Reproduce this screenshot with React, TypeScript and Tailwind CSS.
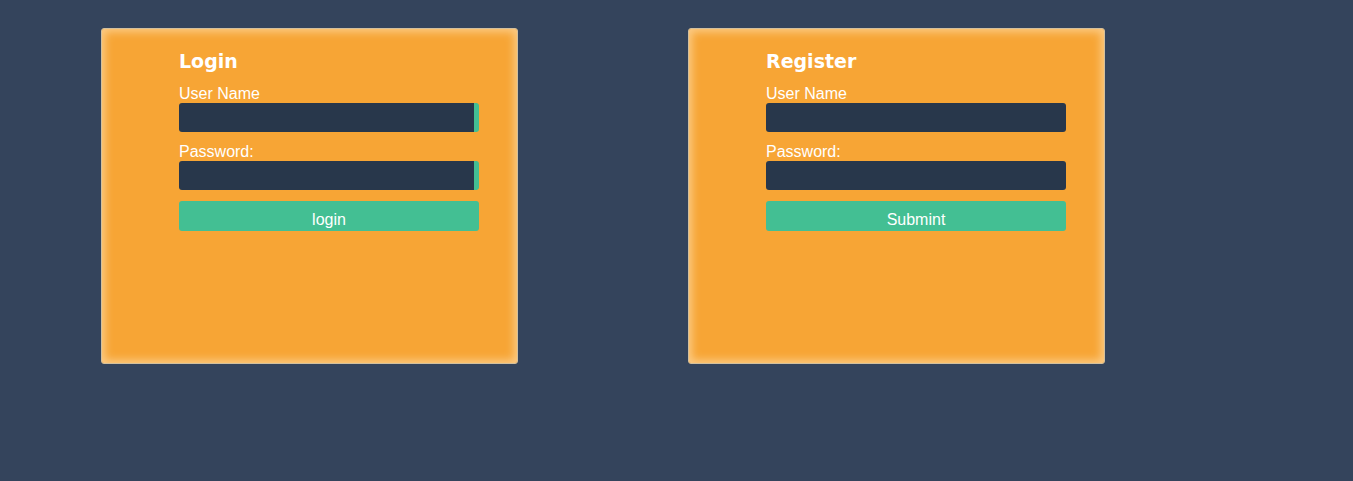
export default function App() {
  return (
    <div className="min-h-[481px] w-full bg-[#34445c] font-['Liberation_Sans',Arial,sans-serif] text-white">
      <div className="flex gap-[170px] pl-[101px] pt-[28px]">
        <FormCard title="Login" button="login" accent />
        <FormCard title="Register" button="Submint" />
      </div>
    </div>
  )
}

function FormCard({ title, button, accent }: { title: string; button: string; accent?: boolean }) {
  const input = accent
    ? "block h-[29px] w-[300px] rounded-[3px] border-r-[5px] border-[#43bf93] bg-[#28374b] outline-none"
    : "block h-[29px] w-[300px] rounded-[3px] bg-[#28374b] outline-none"

  return (
    <div className="h-[336px] w-[417px] rounded-[3px] border border-[#d3c09d] bg-[#f7a535] pl-[77px] pt-[20px] shadow-[inset_0_0_8px_3px_rgba(255,235,200,0.55)]">
      <h2 className="mb-[10px] font-['DejaVu_Sans',sans-serif] text-[19px] font-bold leading-[25px]">{title}</h2>
      <label className="block text-[16px] leading-[19px]">User Name</label>
      <input className={input} />
      <label className="mt-[10px] block text-[16px] leading-[19px]">Password:</label>
      <input type="password" className={input} />
      <button className="mt-[11px] block h-[30px] w-[300px] rounded-[3px] bg-[#43bf93] pt-[8px] text-[16px] leading-[18px] text-white">
        {button}
      </button>
    </div>
  )
}
